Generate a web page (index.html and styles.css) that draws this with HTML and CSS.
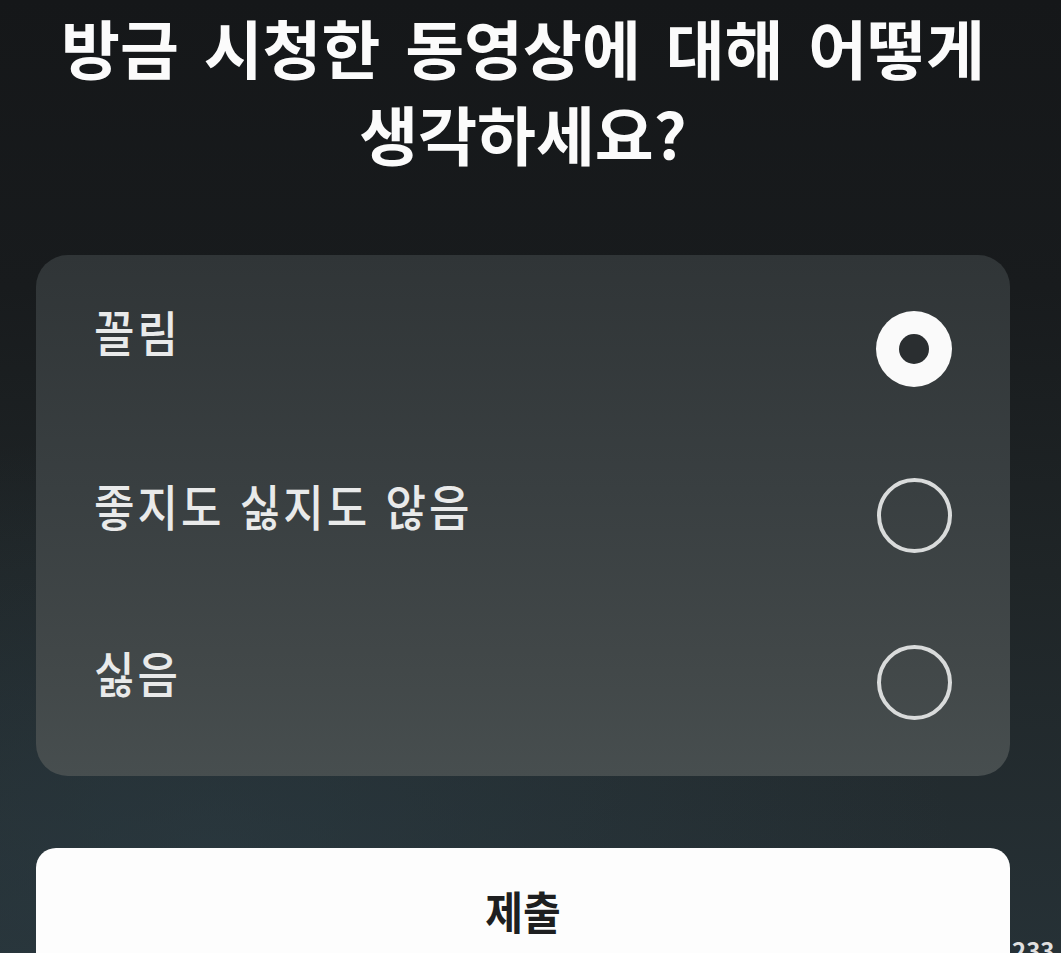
FILE: index.html
```html
<!DOCTYPE html>
<html lang="ko">
<head>
<meta charset="utf-8">
<title>설문</title>
<link rel="stylesheet" href="styles.css">
</head>
<body>
<main class="screen">
  <h1 class="question">방금 시청한 동영상에 대해 어떻게<br>생각하세요?</h1>
  <section class="options">
    <div class="option">
      <span class="label label-raised">꼴림</span>
      <span class="radio radio-on"></span>
    </div>
    <div class="option">
      <span class="label">좋지도 싫지도 않음</span>
      <span class="radio"></span>
    </div>
    <div class="option">
      <span class="label">싫음</span>
      <span class="radio"></span>
    </div>
  </section>
  <button class="submit" type="button"><span class="submit-text">제출</span></button>
</main>
<span class="watermark">233</span>
</body>
</html>
```
FILE: styles.css
```css
html, body {
  margin: 0;
  padding: 0;
  height: 100%;
  overflow: hidden;
}
body {
  position: relative;
  font-family: "Noto Sans CJK KR", "Noto Sans", sans-serif;
  background:
    radial-gradient(ellipse 70% 45% at 20% 90%, rgba(45, 62, 70, 0.55), rgba(45, 62, 70, 0) 100%),
    linear-gradient(180deg, #151719 0%, #181b1d 30%, #1f2527 60%, #263136 100%);
  color: #fafafa;
}
.screen {
  display: flex;
  flex-direction: column;
  padding: 0 51px 0 36px;
}
.question {
  margin: 0;
  padding-top: 3px;
  font-size: 64px;
  font-weight: 700;
  line-height: 86px;
  word-spacing: 7px;
  white-space: nowrap;
  text-align: center;
  height: 171px;
  color: #fbfbfb;
}
.options {
  margin-top: 81px;
  border-radius: 32px;
  background: linear-gradient(180deg, #303537 0%, #393f41 45%, #424849 80%, #474e4f 100%);
  padding: 10px 58px;
  display: flex;
  flex-direction: column;
}
.option {
  height: 167px;
  display: flex;
  align-items: center;
  justify-content: space-between;
}
.label {
  display: inline-block;
  font-size: 44px;
  font-weight: 500;
  letter-spacing: 3px;
  color: #e9eaea;
  transform: scaleY(1.1);
  margin-top: -22px;
}
.label-raised {
  margin-top: -36px;
}
.radio {
  width: 75px;
  height: 75px;
  box-sizing: border-box;
  border-radius: 50%;
  border: 4px solid #d9dbdb;
  display: flex;
  align-items: center;
  justify-content: center;
}
.radio-on {
  border: none;
  width: 76px;
  height: 76px;
  background: #fafafa;
}
.radio-on::after {
  content: "";
  width: 30px;
  height: 30px;
  border-radius: 50%;
  background: #2a2e30;
}
.submit {
  margin-top: 72px;
  height: 124px;
  border: none;
  border-radius: 20px;
  background: #fdfdfd;
  display: flex;
  align-items: center;
  justify-content: center;
  font-family: inherit;
  padding: 0;
}
.submit-text {
  display: inline-block;
  font-size: 41px;
  font-weight: 700;
  color: #1e1f20;
  transform: scaleY(1.1);
}
.watermark {
  position: absolute;
  left: 1012px;
  top: 935px;
  font-size: 24px;
  font-weight: 700;
  line-height: 30px;
  color: #e0e0e0;
}
```
